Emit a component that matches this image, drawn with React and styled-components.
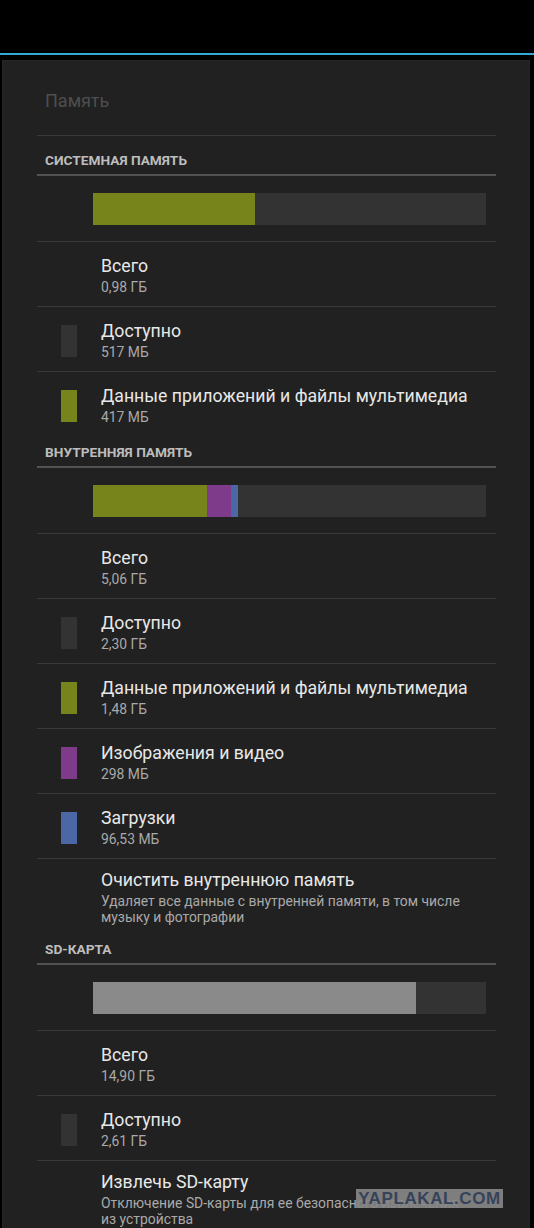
import React from "react"
import styled, { createGlobalStyle } from "styled-components"

const GlobalStyle = createGlobalStyle`
  html, body {
    margin: 0;
    padding: 0;
    background: #000;
    font-family: Roboto, "Noto Sans", "Liberation Sans", sans-serif;
    -webkit-font-smoothing: antialiased;
  }
  body {
    width: 534px;
    height: 1228px;
    overflow: hidden;
  }
`

const COLORS = {
  apps: "#77841b",
  media: "#7d3b89",
  downloads: "#4b67a6",
  free: "#333333",
  sd: "#8a8a8a",
}

const sections = [
  {
    title: "Системная память",
    bar: [{ color: COLORS.apps, part: 0.413 }],
    rows: [
      { title: "Всего", sub: "0,98 ГБ" },
      { title: "Доступно", sub: "517 МБ", swatch: COLORS.free },
      { title: "Данные приложений и файлы мультимедиа", sub: "417 МБ", swatch: COLORS.apps },
    ],
  },
  {
    title: "Внутренняя память",
    bar: [
      { color: COLORS.apps, part: 0.291 },
      { color: COLORS.media, part: 0.059 },
      { color: COLORS.downloads, part: 0.018 },
    ],
    rows: [
      { title: "Всего", sub: "5,06 ГБ" },
      { title: "Доступно", sub: "2,30 ГБ", swatch: COLORS.free },
      { title: "Данные приложений и файлы мультимедиа", sub: "1,48 ГБ", swatch: COLORS.apps },
      { title: "Изображения и видео", sub: "298 МБ", swatch: COLORS.media },
      { title: "Загрузки", sub: "96,53 МБ", swatch: COLORS.downloads },
      {
        title: "Очистить внутреннюю память",
        sub: "Удаляет все данные с внутренней памяти, в том числе музыку и фотографии",
        action: true,
      },
    ],
  },
  {
    title: "SD-карта",
    bar: [{ color: COLORS.sd, part: 0.821 }],
    rows: [
      { title: "Всего", sub: "14,90 ГБ" },
      { title: "Доступно", sub: "2,61 ГБ", swatch: COLORS.free },
      {
        title: "Извлечь SD-карту",
        sub: "Отключение SD-карты для ее безопасного извлечения из устройства",
        action: true,
      },
    ],
  },
]

const Screen = styled.div`
  position: relative;
  width: 534px;
  height: 1228px;
  background: #000;
`

const StatusArea = styled.div`
  height: 53px;
  background: #000;
  border-bottom: 2px solid #35a9d6;
`

const Panel = styled.div`
  margin: 5px 4px 0 2px;
  height: 1200px;
  background: #212121;
  box-shadow: inset 0 0 0 1px #262626;
  padding: 0 34px 0 35px;
`

const Title = styled.div`
  height: 76px;
  box-sizing: border-box;
  padding: 30px 0 0 8px;
  font-size: 18px;
  line-height: 22px;
  color: #4e4e4e;
  border-bottom: 1px solid #3a3a3a;
  margin-bottom: 8px;
`

const SectionHeader = styled.div`
  padding: 8px 0 6px 8px;
  font-size: 13.7px;
  line-height: 16px;
  font-weight: 700;
  text-transform: uppercase;
  color: #bdbdbd;
  border-bottom: 2px solid #525252;
`

const BarRow = styled.div`
  padding: 17px 10px 16px 56px;
`

const Bar = styled.div`
  display: flex;
  height: 32px;
  background: #333333;
`

const BarPart = styled.div`
  height: 100%;
  background: ${(p) => p.$color};
`

const Row = styled.div`
  display: flex;
  align-items: center;
  border-top: 1px solid #3a3a3a;
  box-sizing: border-box;
  padding: ${(p) => (p.$action ? "11px 0 8px" : "14px 0 10px")};
`

const SwatchCell = styled.div`
  flex: 0 0 16px;
  margin: 0 24px;
  height: 32px;
  background: ${(p) => p.$color || "transparent"};
`

const RowText = styled.div`
  flex: 1;
  min-width: 0;
  padding-right: 26px;
`

const RowTitle = styled.div`
  font-size: 17.7px;
  line-height: 20px;
  color: #e8e8e8;
  white-space: nowrap;
`

const RowSub = styled.div`
  margin-top: ${(p) => (p.$action ? "3px" : "2px")};
  font-size: 13.9px;
  line-height: ${(p) => (p.$action ? "16px" : "18px")};
  color: #a9a9a9;
`

const Watermark = styled.div`
  position: absolute;
  left: 356px;
  top: 1189px;
  width: 147px;
  height: 19px;
  background: rgba(135, 135, 135, 0.92);
  color: #36435a;
  font-family: "Liberation Sans", "DejaVu Sans", sans-serif;
  font-weight: 700;
  font-size: 17px;
  line-height: 19px;
  text-align: center;
  letter-spacing: 0.6px;
`

const Section = ({ section }) => (
  <>
    <SectionHeader>{section.title}</SectionHeader>
    <BarRow>
      <Bar>
        {section.bar.map((b, i) => (
          <BarPart key={i} $color={b.color} style={{ width: `${b.part * 100}%` }} />
        ))}
      </Bar>
    </BarRow>
    {section.rows.map((r, i) => (
      <Row key={i} $action={r.action}>
        <SwatchCell $color={r.swatch} />
        <RowText>
          <RowTitle>{r.title}</RowTitle>
          <RowSub $action={r.action}>{r.sub}</RowSub>
        </RowText>
      </Row>
    ))}
  </>
)

export default function App() {
  return (
    <Screen>
      <GlobalStyle />
      <StatusArea />
      <Panel>
        <Title>Память</Title>
        {sections.map((s) => (
          <Section key={s.title} section={s} />
        ))}
      </Panel>
      <Watermark>YAPLAKAL.COM</Watermark>
    </Screen>
  )
}
